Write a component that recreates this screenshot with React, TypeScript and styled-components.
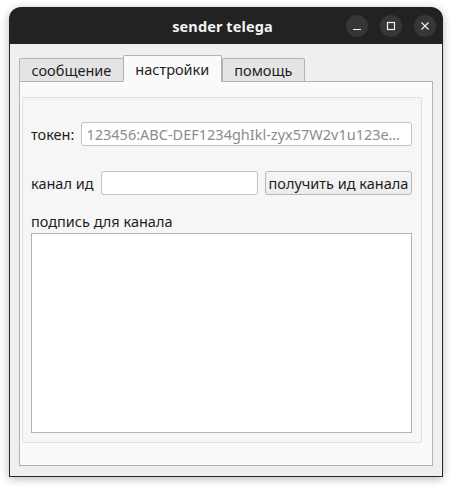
import React from 'react';
import styled, { createGlobalStyle } from 'styled-components';

const GlobalStyle = createGlobalStyle`
  html, body {
    margin: 0;
    padding: 0;
    background: #ffffff;
  }
  body {
    font-family: "Noto Sans", "Open Sans", sans-serif;
  }
`;

const Page = styled.div`
  padding: 7px 9px 9px 9px;
`;

const Window = styled.div`
  width: 434px;
  height: 470px;
  display: flex;
  flex-direction: column;
  border-radius: 12px 12px 0 0;
  box-shadow: 0 2px 10px rgba(0, 0, 0, 0.28);
  overflow: hidden;
`;

const TitleBar = styled.div`
  height: 37px;
  flex: none;
  background: #222222;
  display: grid;
  grid-template-columns: 1fr auto 1fr;
  align-items: center;
  padding: 0 7px 0 0;
`;

const Title = styled.div`
  grid-column: 2;
  color: #f2f2f2;
  font-weight: 700;
  font-size: 14.5px;
  letter-spacing: 0.1px;
`;

const Controls = styled.div`
  grid-column: 3;
  justify-self: end;
  display: flex;
  gap: 12px;
`;

const CtrlButton = styled.div`
  width: 22px;
  height: 22px;
  border-radius: 50%;
  background: #363636;
  display: flex;
  align-items: center;
  justify-content: center;
`;

const Body = styled.div`
  flex: 1;
  display: flex;
  flex-direction: column;
  background: #efefef;
  border: 1px solid #2a2a2a;
  border-top: none;
  padding: 10px 9px 10px 9px;
`;

const TabRow = styled.div`
  display: flex;
  align-items: flex-end;
  height: 27px;
  flex: none;
  position: relative;
  z-index: 1;
`;

const Tab = styled.div<{ $active?: boolean }>`
  height: ${p => (p.$active ? '27px' : '24px')};
  box-sizing: border-box;
  padding: 0 11.5px;
  margin-right: ${p => (p.$active ? '0' : '-1px')};
  display: flex;
  align-items: center;
  justify-content: center;
  font-size: 14.5px;
  color: #1e1e1e;
  background: ${p => (p.$active ? '#fafafa' : '#e4e4e4')};
  border: 1px solid #b2b2b2;
  border-bottom: ${p => (p.$active ? '1px solid #fafafa' : '1px solid #b2b2b2')};
  border-radius: 2px 2px 0 0;
  margin-bottom: -1px;
`;

const Pane = styled.div`
  flex: 1;
  display: flex;
  flex-direction: column;
  background: #fafafa;
  border: 1px solid #b2b2b2;
  padding: 15px 10px 22px 2px;
`;

const Group = styled.div`
  flex: 1;
  display: flex;
  flex-direction: column;
  background: #f6f6f6;
  border: 1px solid #e0e0e0;
  border-radius: 2px;
  padding: 24px 9px 9px 8px;
`;

const Row = styled.div<{ $mt?: number }>`
  display: flex;
  align-items: center;
  gap: 7px;
  margin-top: ${p => p.$mt ?? 0}px;
`;

const Label = styled.span`
  font-size: 14.5px;
  color: #1e1e1e;
  white-space: nowrap;
`;

const Field = styled.input<{ $w?: number }>`
  height: 24px;
  box-sizing: border-box;
  ${p => (p.$w ? `width: ${p.$w}px; flex: none;` : 'flex: 1; min-width: 0;')}
  border: 1px solid #c2c2c2;
  border-radius: 3px;
  background: #ffffff;
  font-family: inherit;
  font-size: 14.5px;
  padding: 0 4px;
  color: #1e1e1e;
  text-overflow: ellipsis;
  outline: none;
  &::placeholder {
    color: #8c8c8c;
  }
`;

const Button = styled.button`
  height: 24px;
  box-sizing: border-box;
  flex: none;
  border: 1px solid #b8b8b8;
  border-radius: 3px;
  background: linear-gradient(#f6f6f6, #ececec);
  font-family: inherit;
  font-size: 14.5px;
  color: #1e1e1e;
  padding: 0 3px;
`;

const Caption = styled(Label)`
  display: block;
  margin-top: 16px;
  line-height: 20px;
`;

const TextArea = styled.textarea`
  margin-top: 2px;
  flex: 1;
  resize: none;
  border: 1px solid #b4b4b4;
  border-radius: 0;
  background: #ffffff;
  outline: none;
`;

const MinimizeIcon = () => (
  <svg width="12" height="12" viewBox="0 0 12 12">
    <path d="M2 9.5h8" stroke="#f0f0f0" strokeWidth="1.2" />
  </svg>
);

const MaximizeIcon = () => (
  <svg width="12" height="12" viewBox="0 0 12 12">
    <rect x="2.5" y="2.5" width="7" height="7" fill="none" stroke="#f0f0f0" strokeWidth="1.2" />
  </svg>
);

const CloseIcon = () => (
  <svg width="12" height="12" viewBox="0 0 12 12">
    <path d="M2.5 2.5l7 7M9.5 2.5l-7 7" stroke="#f0f0f0" strokeWidth="1.2" />
  </svg>
);

const App = () => {
  return (
    <Page>
      <GlobalStyle />
      <Window>
        <TitleBar>
          <Title>sender telega</Title>
          <Controls>
            <CtrlButton><MinimizeIcon /></CtrlButton>
            <CtrlButton><MaximizeIcon /></CtrlButton>
            <CtrlButton><CloseIcon /></CtrlButton>
          </Controls>
        </TitleBar>
        <Body>
          <TabRow>
            <Tab>сообщение</Tab>
            <Tab $active>настройки</Tab>
            <Tab>помощь</Tab>
          </TabRow>
          <Pane>
            <Group>
              <Row>
                <Label>токен:</Label>
                <Field placeholder="123456:ABC-DEF1234ghIkl-zyx57W2v1u123ew11" />
              </Row>
              <Row $mt={25}>
                <Label>канал ид</Label>
                <Field $w={157} />
                <Button>получить ид канала</Button>
              </Row>
              <Caption>подпись для канала</Caption>
              <TextArea />
            </Group>
          </Pane>
        </Body>
      </Window>
    </Page>
  );
};

export default App;
